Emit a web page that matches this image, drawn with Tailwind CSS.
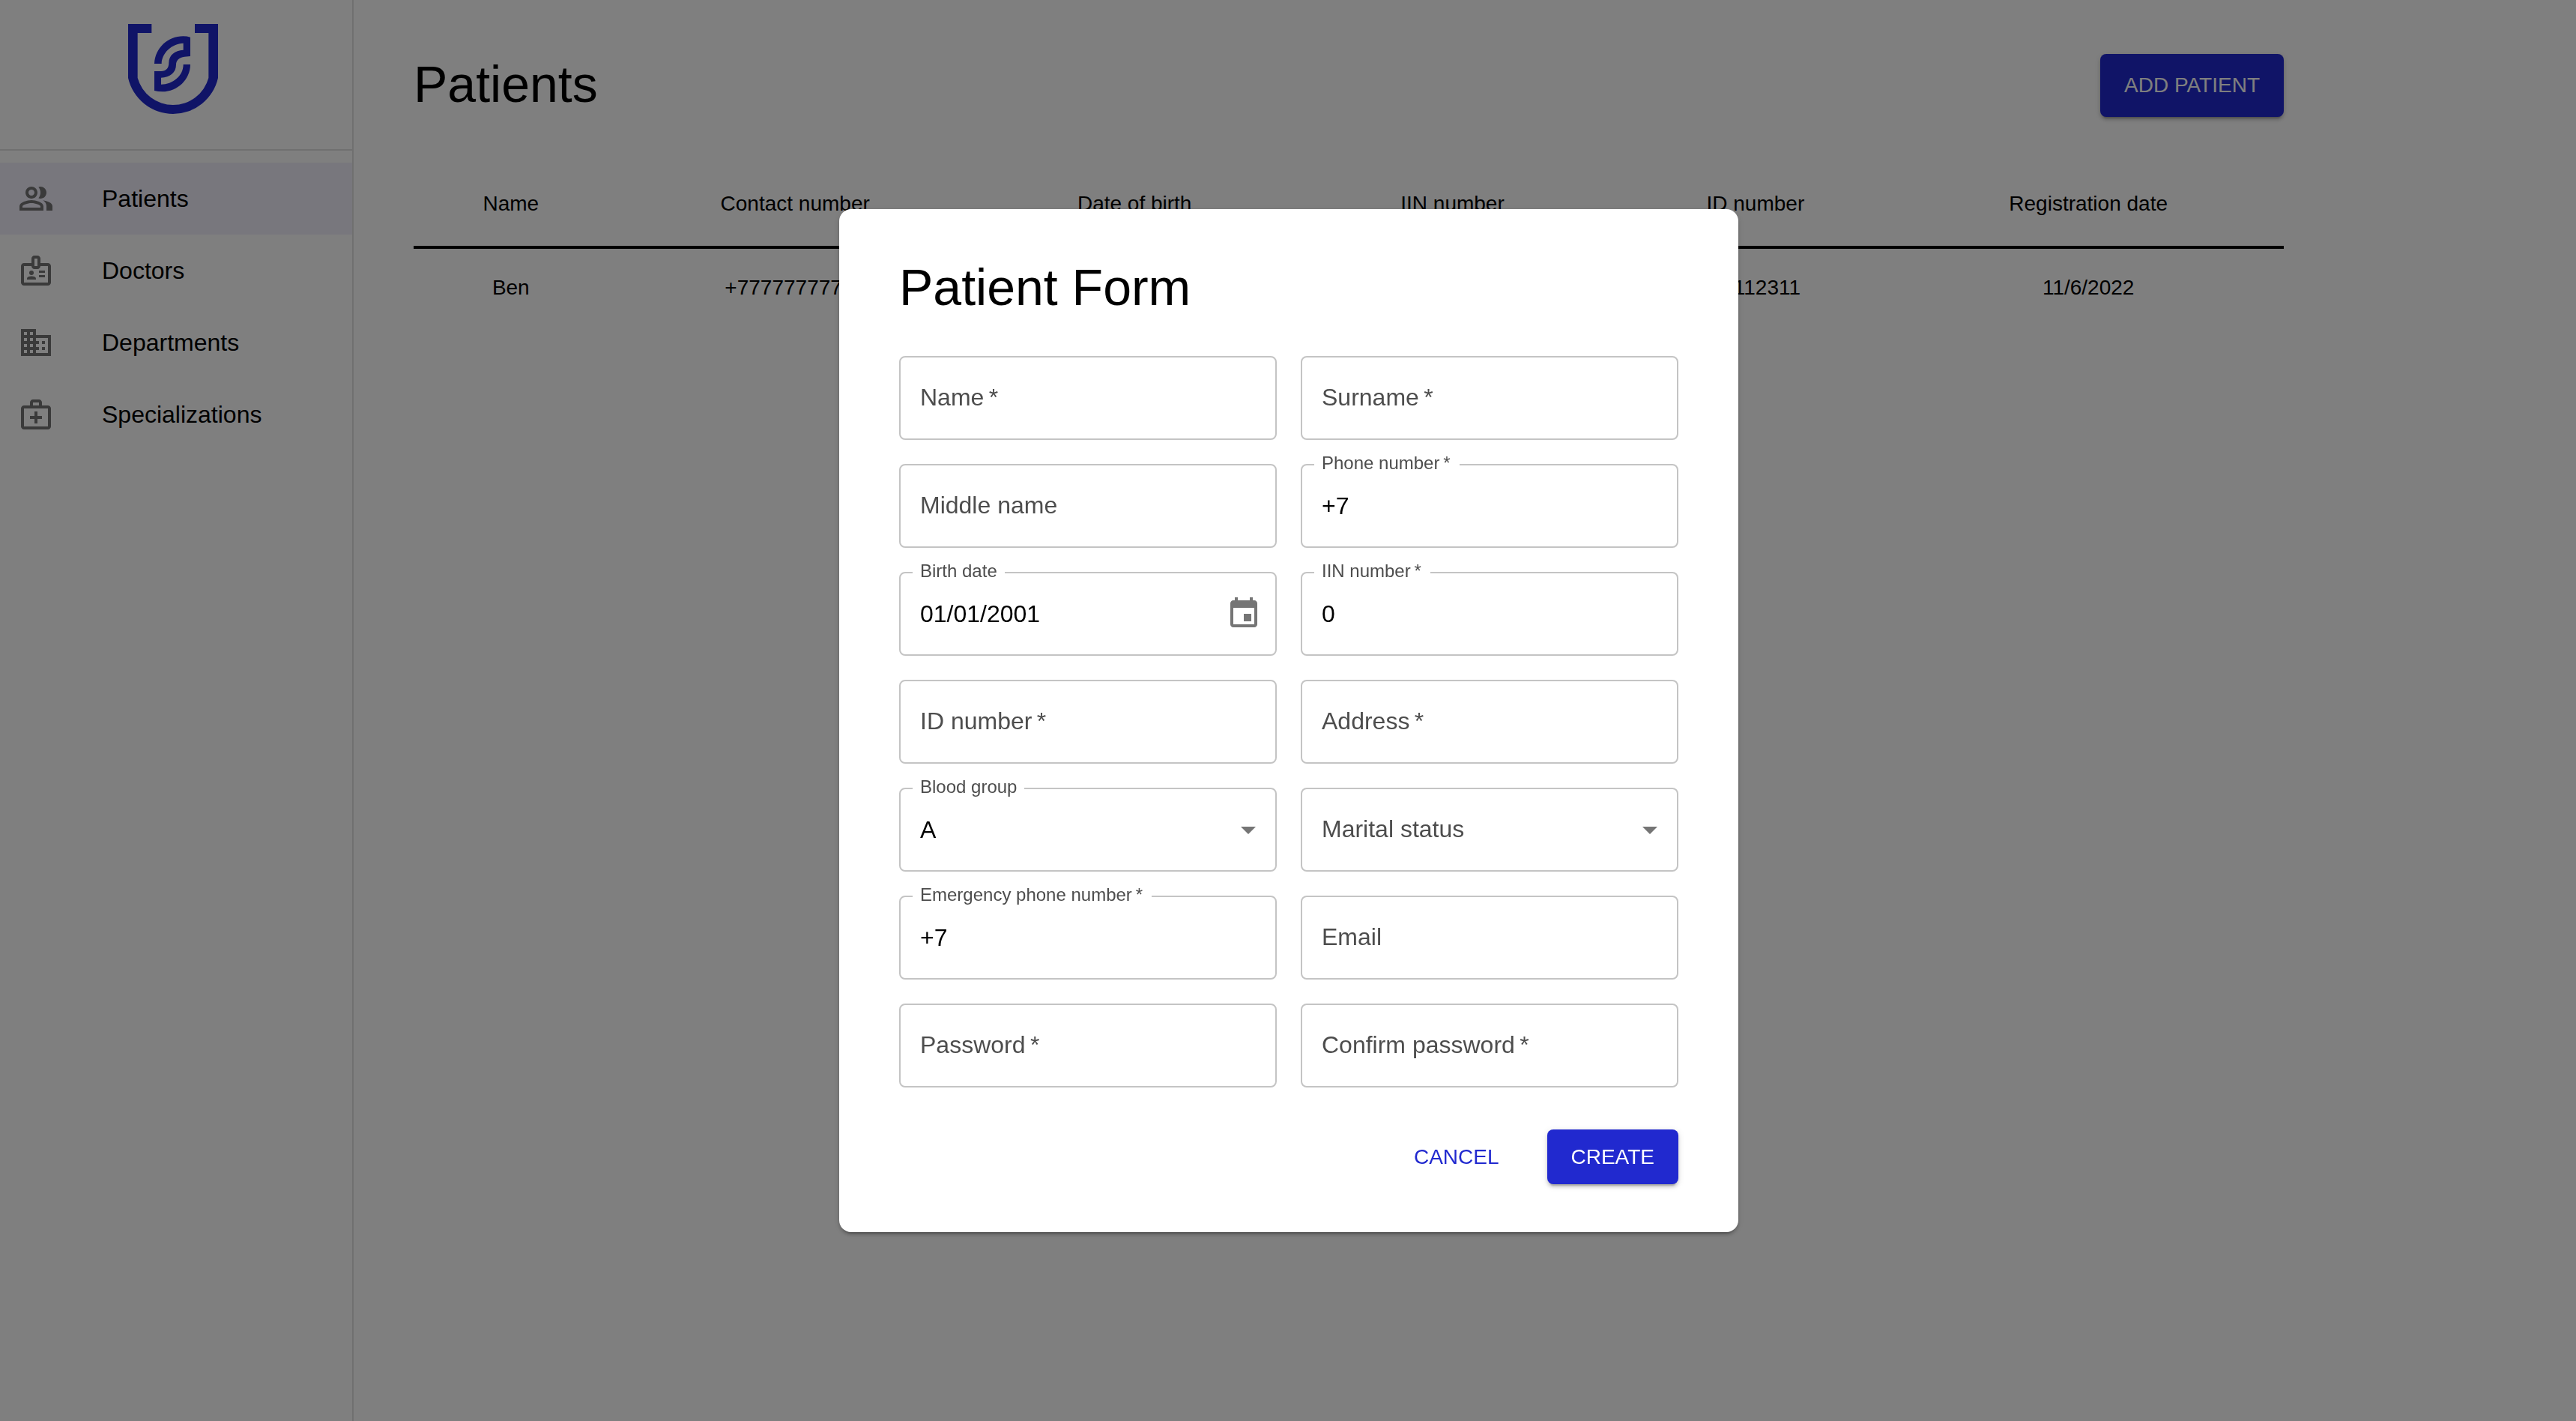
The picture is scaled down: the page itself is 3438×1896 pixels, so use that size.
<!DOCTYPE html>
<html lang="en">
<head>
<meta charset="utf-8">
<meta name="viewport" content="width=device-width, initial-scale=1">
<title>Patients</title>
<script src="https://cdn.jsdelivr.net/npm/@tailwindcss/browser@4"></script>
</head>
<body class="bg-white font-['Liberation_Sans',Arial,sans-serif] text-black">
<div class="flex min-h-screen">
  <aside class="w-[472px] shrink-0 border-r-2 border-[#e0e0e0]">
    <div class="flex justify-center border-b-2 border-[#e0e0e0] pt-8 pb-[47px] pr-2">
      <svg class="size-[120px] text-[#2129cf]" viewBox="0 0 360 360" fill="currentColor" role="img" aria-label="Logo">
        <path d="M0 0H94V36H38V216A147.3 147.3 0 0 0 322 216V36H267V0H360V216A184.5 184.5 0 0 1 0 216Z"/>
        <path d="M105 159C108 95 160 49 220 49Q236 49 249 53V129L226 131C204 133 192 146 192 163C192 195 168 214 132 215V242C178 242 221 208 221 162H249C249 222 198 271 137 271Q120 271 105 267V189H132C152 188 163 177 163 155C163 125 187 105 221 104V77C175 79 135 115 134 159Z"/>
      </svg>
    </div>
    <nav class="flex flex-col py-4 text-[32px] leading-[48px]">
      <a href="#patients" class="flex items-center gap-16 bg-[#f0eefb] px-6 py-6">
        <svg class="size-12 text-[#757575]" viewBox="0 0 24 24" fill="currentColor" aria-hidden="true"><path d="M16.67 13.13C18.04 14.06 19 15.32 19 17v3h4v-3c0-2.18-3.57-3.47-6.33-3.87zM15 12c2.21 0 4-1.79 4-4s-1.79-4-4-4c-.47 0-.91.1-1.33.24C14.5 5.27 15 6.58 15 8s-.5 2.73-1.33 3.76c.42.14.86.24 1.33.24zM9 12c2.21 0 4-1.79 4-4s-1.79-4-4-4-4 1.79-4 4 1.79 4 4 4zm0-6c1.1 0 2 .9 2 2s-.9 2-2 2-2-.9-2-2 .9-2 2-2zm0 7c-2.67 0-8 1.34-8 4v3h16v-3c0-2.66-5.33-4-8-4zm6 5H3v-.99C3.2 16.29 6.3 15 9 15s5.8 1.29 6 2v1z"/></svg>
        <span>Patients</span>
      </a>
      <a href="#doctors" class="flex items-center gap-16 px-6 py-6">
        <svg class="size-12 text-[#757575]" viewBox="0 0 24 24" fill="currentColor" aria-hidden="true"><path d="M20 7h-5V4c0-1.1-.9-2-2-2h-2c-1.1 0-2 .9-2 2v3H4c-1.1 0-2 .9-2 2v11c0 1.1.9 2 2 2h16c1.1 0 2-.9 2-2V9c0-1.1-.9-2-2-2zm-9-3h2v5h-2V4zm9 16H4V9h5c0 1.1.9 2 2 2h2c1.1 0 2-.9 2-2h5v11z"/><circle cx="9" cy="13.5" r="1.5"/><path d="M11.08 16.18C10.44 15.9 9.74 15.75 9 15.75s-1.44.15-2.08.43c-.55.24-.92.78-.92 1.39V18h6v-.43c0-.6-.36-1.15-.92-1.39zM14 15h4v1.5h-4zM14 12h4v1.5h-4z"/></svg>
        <span>Doctors</span>
      </a>
      <a href="#departments" class="flex items-center gap-16 px-6 py-6">
        <svg class="size-12 text-[#757575]" viewBox="0 0 24 24" fill="currentColor" aria-hidden="true"><path d="M12 7V3H2v18h20V7H12zM6 19H4v-2h2v2zm0-4H4v-2h2v2zm0-4H4V9h2v2zm0-4H4V5h2v2zm4 12H8v-2h2v2zm0-4H8v-2h2v2zm0-4H8V9h2v2zm0-4H8V5h2v2zm10 12h-8v-2h2v-2h-2v-2h2v-2h-2V9h8v10zm-2-8h-2v2h2v-2zm0 4h-2v2h2v-2z"/></svg>
        <span>Departments</span>
      </a>
      <a href="#specializations" class="flex items-center gap-16 px-6 py-6">
        <svg class="size-12 text-[#757575]" viewBox="0 0 24 24" fill="currentColor" aria-hidden="true"><path d="M20 6h-4V4c0-1.1-.9-2-2-2h-4c-1.1 0-2 .9-2 2v2H4c-1.1 0-2 .9-2 2v12c0 1.1.9 2 2 2h16c1.1 0 2-.9 2-2V8c0-1.1-.9-2-2-2zM10 4h4v2h-4V4zm10 16H4V8h16v12zM13 10h-2v3H8v2h3v3h2v-3h3v-2h-3z"/></svg>
        <span>Specializations</span>
      </a>
    </nav>
  </aside>

  <main class="min-w-0 flex-1 px-20 pt-[72px]">
    <div class="max-w-[2496px]">
      <header class="flex justify-between">
        <h1 class="text-[68px] leading-[80px]">Patients</h1>
        <button type="button" class="rounded-lg bg-[#2129cf] px-8 text-[28px] leading-[84px] text-white shadow-[0_6px_2px_-4px_rgba(0,0,0,0.2),0_4px_4px_0_rgba(0,0,0,0.14),0_2px_10px_0_rgba(0,0,0,0.12)]">ADD PATIENT</button>
      </header>
      <table class="mt-16 w-full table-fixed text-center text-[28px] leading-10">
        <colgroup>
          <col class="w-[10.4%]"><col class="w-[20%]"><col class="w-[16.3%]"><col class="w-[17.7%]"><col class="w-[14.7%]"><col class="w-[20.9%]">
        </colgroup>
        <thead class="border-b-4 border-black">
          <tr>
            <th scope="col" class="pt-8 pb-9 font-normal">Name</th>
            <th scope="col" class="pt-8 pb-9 font-normal">Contact number</th>
            <th scope="col" class="pt-8 pb-9 font-normal">Date of birth</th>
            <th scope="col" class="pt-8 pb-9 font-normal">IIN number</th>
            <th scope="col" class="pt-8 pb-9 font-normal">ID number</th>
            <th scope="col" class="pt-8 pb-9 font-normal">Registration date</th>
          </tr>
        </thead>
        <tbody>
          <tr>
            <td class="py-8">Ben</td>
            <td class="py-8">+77777777777</td>
            <td class="py-8">1/1/2001</td>
            <td class="py-8">12311231</td>
            <td class="py-8">12112311</td>
            <td class="py-8">11/6/2022</td>
          </tr>
        </tbody>
      </table>
    </div>
  </main>
</div>

<div class="fixed inset-0 flex items-center justify-center bg-black/50 pt-[27px] pl-0.5">
  <form role="dialog" aria-modal="true" aria-labelledby="form-title" class="w-[1200px] max-w-full rounded-2xl bg-white px-20 py-16 shadow-[0_6px_2px_-4px_rgba(0,0,0,0.2),0_4px_4px_0_rgba(0,0,0,0.14),0_2px_10px_0_rgba(0,0,0,0.12)]">
    <h2 id="form-title" class="text-[68px] leading-[80px]">Patient Form</h2>
    <div class="mt-13 grid grid-cols-2 gap-8 text-[32px] leading-[48px]">
      <div class="relative">
        <input id="name" type="text" class="block h-28 w-full rounded-lg border-2 border-[#c4c4c4] px-[26px]">
        <label for="name" class="pointer-events-none absolute top-[31px] left-7 text-[#4d4d4d]">Name&thinsp;*</label>
      </div>
      <div class="relative">
        <input id="surname" type="text" class="block h-28 w-full rounded-lg border-2 border-[#c4c4c4] px-[26px]">
        <label for="surname" class="pointer-events-none absolute top-[31px] left-7 text-[#4d4d4d]">Surname&thinsp;*</label>
      </div>
      <div class="relative">
        <input id="middle" type="text" class="block h-28 w-full rounded-lg border-2 border-[#c4c4c4] px-[26px]">
        <label for="middle" class="pointer-events-none absolute top-[31px] left-7 text-[#4d4d4d]">Middle name</label>
      </div>
      <div class="relative">
        <input id="phone" type="tel" value="+7" class="block h-28 w-full rounded-lg border-2 border-[#c4c4c4] px-[26px]">
        <label for="phone" class="absolute -top-[13px] left-[18px] bg-white pr-3 pl-2.5 text-2xl leading-6 text-[#4d4d4d]">Phone number&thinsp;*</label>
      </div>
      <div class="relative">
        <input id="birth" type="text" value="01/01/2001" class="block h-28 w-full rounded-lg border-2 border-[#c4c4c4] px-[26px]">
        <label for="birth" class="absolute -top-[13px] left-[18px] bg-white px-2.5 text-2xl leading-6 text-[#4d4d4d]">Birth date</label>
        <button type="button" aria-label="Choose date" class="absolute top-8 right-5">
          <svg class="size-12 text-[#757575]" viewBox="0 0 24 24" fill="currentColor" aria-hidden="true"><path d="M17 12h-5v5h5v-5zM16 1v2H8V1H6v2H5c-1.11 0-1.99.9-1.99 2L3 19c0 1.1.89 2 2 2h14c1.1 0 2-.9 2-2V5c0-1.1-.9-2-2-2h-1V1h-2zm3 18H5V8h14v11z"/></svg>
        </button>
      </div>
      <div class="relative">
        <input id="iin" type="text" value="0" class="block h-28 w-full rounded-lg border-2 border-[#c4c4c4] px-[26px]">
        <label for="iin" class="absolute -top-[13px] left-[18px] bg-white pr-3 pl-2.5 text-2xl leading-6 text-[#4d4d4d]">IIN number&thinsp;*</label>
      </div>
      <div class="relative">
        <input id="idnum" type="text" class="block h-28 w-full rounded-lg border-2 border-[#c4c4c4] px-[26px]">
        <label for="idnum" class="pointer-events-none absolute top-[31px] left-7 text-[#4d4d4d]">ID number&thinsp;*</label>
      </div>
      <div class="relative">
        <input id="address" type="text" class="block h-28 w-full rounded-lg border-2 border-[#c4c4c4] px-[26px]">
        <label for="address" class="pointer-events-none absolute top-[31px] left-7 text-[#4d4d4d]">Address&thinsp;*</label>
      </div>
      <div class="relative">
        <select id="blood" class="block h-28 w-full appearance-none rounded-lg border-2 border-[#c4c4c4] px-[26px]">
          <option selected>A</option><option>B</option><option>AB</option><option>O</option>
        </select>
        <label for="blood" class="absolute -top-[13px] left-[18px] bg-white px-2.5 text-2xl leading-6 text-[#4d4d4d]">Blood group</label>
        <svg class="pointer-events-none absolute top-8 right-3.5 size-12 text-[#757575]" viewBox="0 0 24 24" fill="currentColor" aria-hidden="true"><path d="M7 10l5 5 5-5z"/></svg>
      </div>
      <div class="relative">
        <select id="marital" class="block h-28 w-full appearance-none rounded-lg border-2 border-[#c4c4c4] px-[26px]">
          <option selected value=""></option><option>Single</option><option>Married</option>
        </select>
        <label for="marital" class="pointer-events-none absolute top-[31px] left-7 text-[#4d4d4d]">Marital status</label>
        <svg class="pointer-events-none absolute top-8 right-3.5 size-12 text-[#757575]" viewBox="0 0 24 24" fill="currentColor" aria-hidden="true"><path d="M7 10l5 5 5-5z"/></svg>
      </div>
      <div class="relative">
        <input id="emergency" type="tel" value="+7" class="block h-28 w-full rounded-lg border-2 border-[#c4c4c4] px-[26px]">
        <label for="emergency" class="absolute -top-[13px] left-[18px] bg-white pr-3 pl-2.5 text-2xl leading-6 text-[#4d4d4d]">Emergency phone number&thinsp;*</label>
      </div>
      <div class="relative">
        <input id="email" type="email" class="block h-28 w-full rounded-lg border-2 border-[#c4c4c4] px-[26px]">
        <label for="email" class="pointer-events-none absolute top-[31px] left-7 text-[#4d4d4d]">Email</label>
      </div>
      <div class="relative">
        <input id="password" type="password" class="block h-28 w-full rounded-lg border-2 border-[#c4c4c4] px-[26px]">
        <label for="password" class="pointer-events-none absolute top-[31px] left-7 text-[#4d4d4d]">Password&thinsp;*</label>
      </div>
      <div class="relative">
        <input id="confirm" type="password" class="block h-28 w-full rounded-lg border-2 border-[#c4c4c4] px-[26px]">
        <label for="confirm" class="pointer-events-none absolute top-[31px] left-7 text-[#4d4d4d]">Confirm password&thinsp;*</label>
      </div>
    </div>
    <div class="mt-14 flex justify-end gap-12 text-[28px] leading-[49px]">
      <button type="button" class="rounded-lg px-4 py-3 text-[#2129cf]">CANCEL</button>
      <button type="submit" class="rounded-lg bg-[#2129cf] px-8 py-3 text-white shadow-[0_6px_2px_-4px_rgba(0,0,0,0.2),0_4px_4px_0_rgba(0,0,0,0.14),0_2px_10px_0_rgba(0,0,0,0.12)]">CREATE</button>
    </div>
  </form>
</div>
</body>
</html>
